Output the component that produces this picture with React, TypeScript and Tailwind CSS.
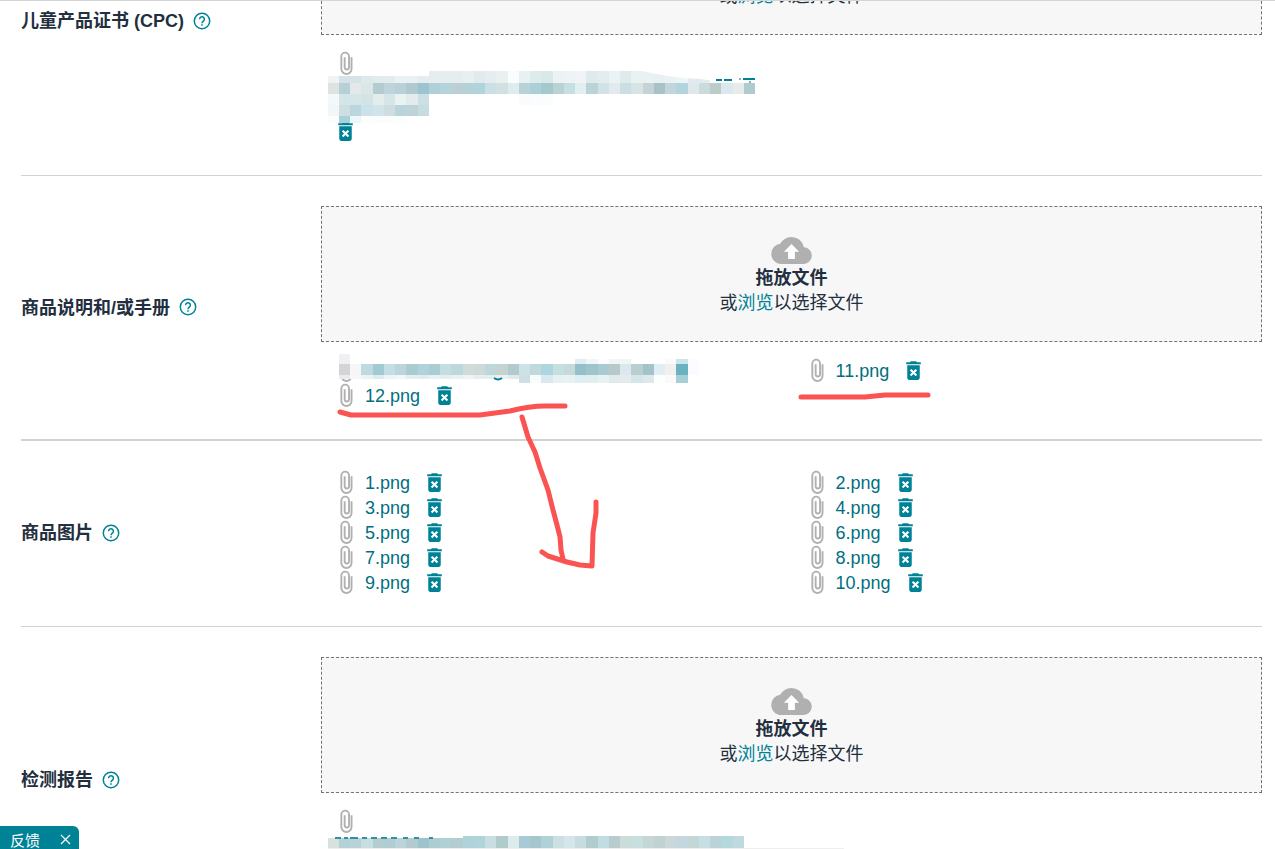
import { ReactNode } from 'react';
import { MdDeleteForever } from 'react-icons/md';

/* ── Censored file names: [first tile, y, height, colours of the tiles] ── */
type Strip = [number, number, number, string];

const TILE = 45 / 4;

const CPC_STRIPS: Strip[] = [
  [0, 5, 7, 'eef4f3 d5e3e6 d2e4e6 dfe9eb e0ecec e3eced e9f1f2 e9f0f2 e5edef'],
  [9, 0, 12, 'e5edef e5edef e5edef e8eff1 e2eaed e5edf0 e8f1f0 fafdfe e7f1f1 dcebec d8e9e8 eaf2f4 eef4f5 f0f4f7 dfeaee e3edf0 e9f2f4 dfebeb eaf1f3 e9f1f3 e8f0f2 ebf2f4 eef4f6 e1eaee e3ecee'],
  [0, 12, 11, 'dee2e0 b5d1d6 e2e9e8 dbe6e9 b3cccf bfd4da b8d0d7 b0c8cf 9bc3d0 b0d0d7 b3d4dc bbd0d5 b4d2d8 b0d4dc cbdfe4 d1e0e1 deecef b9d2d6 adcfd8 a3c8ce bbd2d5 c5dfe3 e2eef0 bad4d6 d2e1e6 e2eaed c9dfe3 d8e4e4 c4d4d5 a9c2c7 c0d6db b1d4dd dfe9eb cbdbdc bccccb dbe8f0 e7ebea b0cbcd'],
  [0, 23, 11, 'f3f9fa d3e6e7 d6e5e7 d3e4e6 e3edee d6e5e7 e9f3f2 e3ebed cce0e4'],
  [17, 23, 11, 'fafbfd fbfcfd fafdfd'],
  [0, 34, 11, 'f1f7f8 cddfdf bcd7db cbe1eb d0e4ea d0dddf b9d5db bfd3d6 c6dce0'],
  [0, 45, 7, 'fbfcfc a8d2da edf6fb fdfdfd fbfcfc fbfcfc fcfdfd'],
];

const MANUAL_STRIPS: Strip[] = [
  [1, 0, 10, 'eef0f2'],
  [22, 5, 5, 'e0eef1 f1f7f9 fdfdfd f0f5f5 eff6f7'],
  [30, 5, 5, 'fbf9f9 cde5ea fbfcff'],
  [1, 10, 11, 'd6d3d6 f6f6f9 bfdade a1cad3 c3dee4 bdd5da aaccd0 b0d2da abccd4 c3dde3 bdd7dc d1dcd8 cddad7 bdd7db c4d5d1 b0cace cde1e6 bfdadc afd5de c4e0e1 c6dadc 93c0ca 9fc5cc a8cad0 b7c9c9 dce8ed b9cecf a4c3c8 dfedf5 f2f0ee 6ab1c1 fbfcff'],
  [1, 21, 4, 'e9ebed f6f7f8 ebf3f3 dfecef eef3f4 f1f6f6 e6eff0 e0edef e9f1f3 e6eff0 e9f1f3 eef4f4 e6efef e4eeef eaf1f1 e0eaec'],
  [17, 21, 8, 'cddfe2 f8fdfb dae9ee e7f1f2 e9f2f3 dfeef0 e1eef0 e8f2f2 e1eaeb e3ebed d5e5e9 dfe9ec fdffff fafaf9 a6cfd8'],
];

const REPORT_STRIPS: Strip[] = [
  [0, 2, 10, 'd9e1de b3d1d7 b9d2d7 c9dee1 b5cdcf b2cdd2 bcd3d7 b1cbd0 9fc3cd acced3 afd0d6 b3ccd0'],
  [12, 0, 12, 'afd3d8 b1d4db c8dee1 b0cbcc dcecec a8c9d6 a5c6cc aed2d8 cce0e2 d4e6ea c6dcdf b1cccc c2dde2 b8ccd0 cbdcdb c7dfdf c5d6d5 c0d3d2 cad8da c5d7de c4d7d8 c7dfe3 b9d3d8 b4d8dc bfd9df'],
];

const edge = (i: number) => Math.floor(i * TILE);

function Mosaic({ strips, className, children }: { strips: Strip[]; className: string; children?: ReactNode }) {
  return (
    <svg aria-hidden="true" width="530" height="54" shapeRendering="crispEdges" className={`pointer-events-none absolute ${className}`}>
      {strips.map(([col, y, h, colours], s) =>
        colours.split(' ').map((c, i) => (
          <rect key={`${s}-${i}`} x={edge(col + i)} y={y} width={edge(col + i + 1) - edge(col + i)} height={h} fill={`#${c}`} />
        ))
      )}
      {children}
    </svg>
  );
}

function Clip() {
  return (
    <svg width="25" height="25" viewBox="0 0 24 24" aria-hidden="true" fill="none" stroke="#b0b0b0" strokeWidth="1.8" className="shrink-0">
      <path d="M17.8 6v11.2a4.9 4.9 0 0 1-9.8 0V5.3a3.7 3.7 0 0 1 7.4 0v10.4a2.1 2.1 0 0 1-4.2 0V6" />
    </svg>
  );
}

function DeleteButton({ name }: { name: string }) {
  return (
    <button type="button" aria-label={`删除 ${name}`} className="block shrink-0 cursor-pointer text-[#008296]">
      <MdDeleteForever size={25} />
    </button>
  );
}

function FileItem({ name }: { name: string }) {
  return (
    <li className="flex h-[25px] items-center pl-3">
      <Clip />
      <a href="#" className="ml-[7px] mr-3 pt-0.5 text-[#006f80] hover:underline">{name}</a>
      <DeleteButton name={name} />
    </li>
  );
}

function BrowseLine() {
  return (
    <p className="shrink-0">
      或<button type="button" className="cursor-pointer text-[#008296]">浏览</button>以选择文件
    </p>
  );
}

function DropZone() {
  return (
    <div className="flex flex-col items-center border border-dashed border-[#6f7373] bg-[#f7f7f7] pt-[30px] pb-[25px]">
      <svg width="41" height="27" viewBox="0 4 24 16" aria-hidden="true" className="mb-0.5 fill-[#b0b0b0]">
        <path d="M19.35 10.04A7.49 7.49 0 0 0 12 4C9.11 4 6.6 5.64 5.35 8.04A5.994 5.994 0 0 0 0 14c0 3.31 2.69 6 6 6h13c2.76 0 5-2.24 5-5 0-2.64-2.05-4.78-4.65-4.96z" />
        <path d="M14 12.8v4.2h-4v-4.2H7.5L12 8.2l4.5 4.6z" fill="#fff" />
      </svg>
      <p className="font-bold">拖放文件</p>
      <BrowseLine />
    </div>
  );
}

function HelpIcon() {
  return (
    <svg width="20" height="20" viewBox="0 0 20 20" fill="none" stroke="currentColor" strokeWidth="1.5">
      <circle cx="10" cy="10" r="7.7" />
      <path d="M7.6 8.3a2.4 2.4 0 1 1 3.9 1.8c-.9.7-1.5 1.1-1.5 2.2" />
      <path d="M10 13.2v1.6" />
    </svg>
  );
}

function Section({ label, className, labelClass = 'items-center', children }: {
  label: string; className: string; labelClass?: string; children: ReactNode;
}) {
  return (
    <section className={`flex shrink-0 border-[#d0d3d6] ${className}`}>
      <div className={`flex w-[300px] shrink-0 ${labelClass}`}>
        <h2 className="pt-0.5 font-bold">{label}</h2>
        <button type="button" aria-label={`${label} 帮助`} className="ml-2 cursor-pointer text-[#008296]">
          <HelpIcon />
        </button>
      </div>
      <div className="min-w-0 flex-1">{children}</div>
    </section>
  );
}

/* ── Long file name that wraps below its paperclip ── */
function WrappedFile({ name, children }: { name: string; children: ReactNode }) {
  return (
    <div className="relative mt-4 flex flex-col gap-[43px] pl-3">
      <Clip />
      <DeleteButton name={name} />
      {children}
    </div>
  );
}

const IMAGES = ['1.png', '2.png', '3.png', '4.png', '5.png', '6.png', '7.png', '8.png', '9.png', '10.png'];

export default function App() {
  return (
    <div className="relative flex h-screen flex-col overflow-hidden border-t border-[#d5d5d5] bg-white pr-[13px] pl-[21px] font-['Liberation_Sans','Noto_Sans_CJK_SC',sans-serif] text-[18px] leading-[25px] text-[#232f3e]">
      <Section label="儿童产品证书 (CPC)" className="border-b pb-[31px]" labelClass="items-center self-start pt-1.5">
        {/* tail end of a drop zone scrolled under the top edge */}
        <div className="flex h-[34px] flex-col items-center justify-end overflow-hidden border border-t-0 border-dashed border-[#6f7373] bg-[#f7f7f7] pb-[25px]">
          <BrowseLine />
        </div>
        <WrappedFile name="证书">
          <Mosaic strips={CPC_STRIPS} className="top-5 left-[7px]">
            <path d="M314 0 Q345 7 372 8 L395 11 V0 Z" fill="#fff" shapeRendering="auto" />
            <path d="M388 9h6M396 9h8M415 8h12" stroke="#008296" strokeWidth="2" />
            <path d="M411 7h2v2h-2zM421 10h2v2h-2z" fill="#7fb5bf" />
          </Mosaic>
        </WrappedFile>
      </Section>

      <Section label="商品说明和/或手册" className="border-b-2 pt-[30px] pb-[31px]">
        <DropZone />
        <ul className="mt-4 grid grid-cols-2">
          <li className="relative h-[25px] pl-3">
            <Clip />
            <Mosaic strips={MANUAL_STRIPS} className="-top-1 left-[7px]">
              <path d="M166 24q4 3 8 0" stroke="#008296" strokeWidth="2" fill="none" shapeRendering="auto" />
            </Mosaic>
          </li>
          <FileItem name="11.png" />
          <FileItem name="12.png" />
        </ul>
      </Section>

      <Section label="商品图片" className="border-b pt-[29px] pb-[31px]">
        <ul className="grid grid-cols-2">
          {IMAGES.map(name => <FileItem key={name} name={name} />)}
        </ul>
      </Section>

      <Section label="检测报告" className="pt-[30px] pb-[31px]">
        <DropZone />
        <WrappedFile name="检测报告">
          <Mosaic strips={REPORT_STRIPS} className="top-[27px] left-[7px]">
            <path d="M7 2h6M16 2h4M22 2h8M34 2h5M43 2h6M53 2h6M63 2h6M75 2h5M86 2h5M101 2h4" stroke="#2f929f" strokeWidth="2" />
            <path d="M0 12h516" stroke="#eeeeee" />
          </Mosaic>
        </WrappedFile>
      </Section>

      {/* ── Hand-drawn marks ── */}
      <svg aria-hidden="true" className="pointer-events-none absolute inset-0 size-full" fill="none" stroke="#fb5252" strokeWidth="5" strokeLinecap="round" strokeLinejoin="round">
        <path d="M340 411 L351 414 H480 L510 410 Q530 405 545 405 H565" />
        <path d="M522 416 L528 436 L535 451 L540 467 L548 489 L553 509 L557 524 L560 536 L561 549 L563 558" />
        <path d="M542 551 L548 555 L567 561 L580 564 L592 565 L593 532 L596 512 V501" />
        <path d="M801 396 H865 L885 394 H928" />
      </svg>

      {/* ── Feedback tab ── */}
      <div className="fixed bottom-0 left-0 flex h-[23px] items-center overflow-hidden rounded-tr-md bg-[#008296] pr-2 pl-2.5 text-[15px] text-white">
        <button type="button" className="mt-1.5 cursor-pointer">反馈</button>
        <button type="button" aria-label="关闭反馈" className="mt-1 ml-5 cursor-pointer">
          <svg width="11" height="11" viewBox="0 0 11 11" stroke="currentColor" strokeWidth="1.2">
            <path d="M1 1l9 9M10 1l-9 9" />
          </svg>
        </button>
      </div>
    </div>
  );
}
